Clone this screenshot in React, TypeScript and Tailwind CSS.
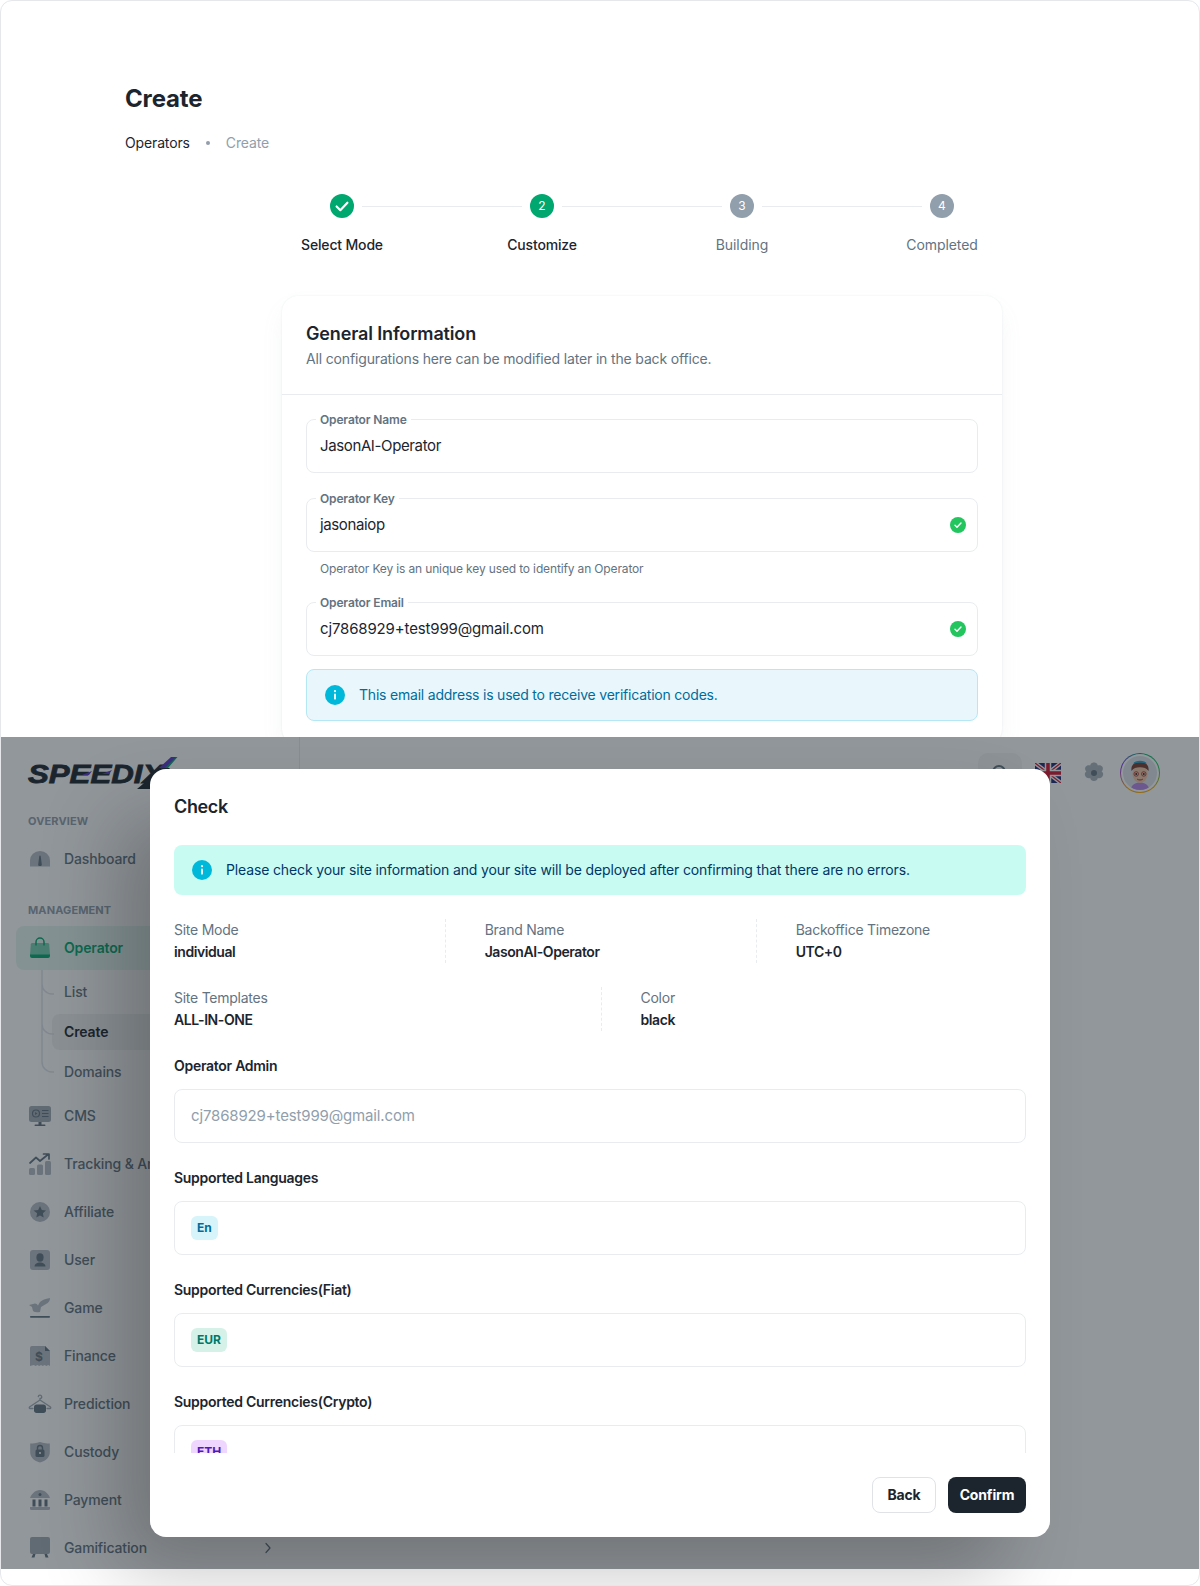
import React from "react";

const Info = ({ c = "text-[#00b8d9]" }: { c?: string }) => (
  <svg viewBox="0 0 20 20" className={`h-5 w-5 shrink-0 ${c}`}>
    <circle cx="10" cy="10" r="10" fill="currentColor" />
    <rect x="9.1" y="8.6" width="1.8" height="6" rx="0.9" fill="#fff" />
    <circle cx="10" cy="6.2" r="1.1" fill="#fff" />
  </svg>
);

const GreenCheck = () => (
  <svg viewBox="0 0 16 16" className="h-4 w-4 shrink-0">
    <circle cx="8" cy="8" r="8" fill="#22c55e" />
    <path d="M5 8.3l2 2 4-4.3" fill="none" stroke="#fff" strokeWidth="1.4" strokeLinecap="round" strokeLinejoin="round" />
  </svg>
);

const Step = ({ n, label, state, first, last }: { n: string; label: string; state: "done" | "active" | "idle"; first?: boolean; last?: boolean }) => (
  <div className="flex w-[200px] flex-col items-center">
    <div className="flex w-full items-center">
      <div className={`h-px flex-1 ${first ? "" : "bg-[#e9ecef]"}`} />
      <div className={`mx-2 flex h-6 w-6 items-center justify-center rounded-full text-xs ${state === "idle" ? "bg-[#919eab]" : "bg-[#00a76f]"} text-white`}>
        {state === "done" ? (
          <svg viewBox="0 0 24 24" className="h-5 w-5">
            <path d="M5.5 12.5l4.5 4.5 8.5-9" fill="none" stroke="#fff" strokeWidth="2.6" strokeLinecap="round" strokeLinejoin="round" />
          </svg>
        ) : (
          n
        )}
      </div>
      <div className={`h-px flex-1 ${last ? "" : "bg-[#e9ecef]"}`} />
    </div>
    <div className={`mt-4 text-sm leading-[22px] ${state === "idle" ? "tracking-[-0.005em] text-[#637381]" : "font-medium tracking-[-0.012em] text-[#1c252e]"}`}>{label}</div>
  </div>
);

const Field = ({ label, value, check, wide }: { label: string; value: string; check?: boolean; wide?: boolean }) => (
  <div className="relative flex h-[54px] items-center justify-between rounded-lg border border-[#e9ecef] px-[13px]">
    <span className="absolute -top-[9px] left-[9px] bg-white px-1 text-xs font-semibold leading-[18px] tracking-[-0.012em] text-[#637381]">{label}</span>
    <span className={`text-[15px] text-[#1c252e] ${wide ? "tracking-[-0.01em]" : "tracking-[-0.025em]"}`}>{value}</span>
    {check && <span className="-mr-[2px]"><GreenCheck /></span>}
  </div>
);

const I = ({ children, className = "" }: { children: React.ReactNode; className?: string }) => (
  <svg viewBox="0 0 24 24" className={`h-6 w-6 shrink-0 ${className}`} fill="currentColor">
    {children}
  </svg>
);

const icons: Record<string, React.ReactNode> = {
  Dashboard: (
    <I>
      <path opacity=".48" d="M2 19.5v-6a10 9.5 0 0 1 20 0v6z" />
      <path d="M12 8.5c.5 0 .7.4.8 1l.9 7.2a1.8 1.8 0 0 1-1.7 2.3 1.8 1.8 0 0 1-1.7-2.3l.9-7.2c.1-.6.3-1 .8-1z" />
    </I>
  ),
  Operator: (
    <I>
      <path opacity=".48" d="M4.3 7h15.4c.8 0 1.4.6 1.5 1.3l.8 10.7H2l.8-10.7C2.9 7.6 3.500 7 4.300 7z" />
      <path d="M2 18.500h20v1.500a2 2 0 0 1-2 2H4a2 2 0 0 1-2-2z" />
      <path d="M8 9V6a4 4 0 0 1 8 0v3" fill="none" stroke="currentColor" strokeWidth="1.500" strokeLinecap="round" />
    </I>
  ),
  CMS: (
    <I>
      <rect opacity=".6" x="1" y="2" width="22" height="16" rx="2.500" />
      <circle cx="8" cy="9.500" r="3.500" fill="none" stroke="currentColor" strokeWidth="1.200" />
      <path d="M7 8v3l2.500-1.500z" />
      <path d="M14 6.500h6.500M14 9.500h6.500M14 12.500h6.500" stroke="currentColor" strokeWidth="1.200" />
      <rect x="10.500" y="18" width="3" height="3" />
      <rect x="6.500" y="20.500" width="11" height="1.500" rx=".7" />
    </I>
  ),
  Tracking: (
    <I>
      <rect opacity=".48" x="1" y="16" width="6" height="7" rx="1.500" />
      <rect opacity=".48" x="9" y="12.500" width="6" height="10.500" rx="1.500" />
      <rect opacity=".48" x="17" y="9" width="6" height="14" rx="1.500" />
      <path d="M2 11l6-5.500 4 3.500L20 2.500M15.500 2h5.500v5" fill="none" stroke="currentColor" strokeWidth="1.700" strokeLinecap="round" strokeLinejoin="round" />
    </I>
  ),
  Affiliate: (
    <I>
      <circle opacity=".48" cx="12" cy="12" r="10" />
      <path d="M12 6l1.800 3.900 4.200.5-3.100 2.900.8 4.200-3.700-2.100-3.700 2.100.8-4.200L5.500 10.400l4.700-.5z" />
    </I>
  ),
  User: (
    <I>
      <rect opacity=".48" x="2" y="2" width="20" height="20" rx="3" />
      <ellipse cx="12" cy="9.500" rx="3.600" ry="4.200" />
      <path d="M6.500 18.500c.3-3 2.800-4 5.500-4s5.200 1 5.500 4z" />
    </I>
  ),
  Game: (
    <I>
      <path opacity=".48" d="M1 9l6-1.500q2 0 3 2l2-3.500q3-3 10-4q0 4-4 6l-5 3-1 5q-5 1-7-1l-1-4z" />
      <rect x="2" y="20" width="20" height="1.700" rx=".8" />
    </I>
  ),
  Finance: (
    <I>
      <path opacity=".48" d="M4 2h13l5 5v15l-1.800-1-1.800 1-1.800-1-1.800 1-1.800-1-1.800 1-1.800-1-1.800 1-1.800-1L2 22V4a2 2 0 0 1 2-2z" />
      <path d="M17 2l5 5h-5z" />
      <text x="11" y="16.500" textAnchor="middle" fontSize="12" fontWeight="700" fontFamily="Inter, sans-serif">$</text>
    </I>
  ),
  Prediction: (
    <I>
      <path d="M12 6.500c1.500 0 1.900-1 1.700-1.900-.2-.9-.9-1.400-1.700-1.400s-1.600.5-1.700 1.400M12 6.500v1.500L1.500 15c-.5.500-.2 1.500.5 1.500h3M12 8l10.500 7c.5.500.2 1.500-.5 1.500h-3" fill="none" stroke="currentColor" strokeOpacity=".6" strokeWidth="1.300" strokeLinecap="round" />
      <path d="M6 15c0-1.500 1-2.500 2.500-2.500h7c1.500 0 2.500 1 2.500 2.500v3.500c0 1.500-1 2.500-2.500 2.500h-7C7 21 6 20 6 18.500z" />
    </I>
  ),
  Custody: (
    <I>
      <path opacity=".48" d="M2.200 3.500C5 3.500 8 3 12 2c4 1 7 1.500 9.800 1.500v8.500c0 5.500-4 9-9.800 10.500C6.200 21 2.200 17.500 2.200 12z" />
      <rect x="7.500" y="9.500" width="9" height="7.500" rx="1.500" />
      <path d="M9.500 10V8a2.500 2.500 0 0 1 5 0v2" fill="none" stroke="currentColor" strokeWidth="1.400" />
      <circle cx="12" cy="13" r="1" fill="#fff" />
    </I>
  ),
  Payment: (
    <I>
      <path opacity=".48" d="M2 10C3 6.500 7 2 12 2s9 4.500 10 8z" />
      <circle cx="12" cy="6.500" r="1.500" />
      <path d="M4.500 11.500h3v7h-3zM10.500 11.500h3v7h-3zM16.500 11.500h3v7h-3z" />
      <path opacity=".48" d="M2 19h20v1.500a1.500 1.500 0 0 1-1.500 1.500h-17A1.500 1.500 0 0 1 2 20.500z" />
    </I>
  ),
  Gamification: (
    <I>
      <rect opacity=".6" x="2" y="1" width="20" height="17" rx="2" />
      <path d="M5 18h2.500l-1 3.500H3.500zM16.500 18H19l1.500 3.500h-3z" />
    </I>
  ),
};

const NavRow = ({ name, label, chevron }: { name: string; label: string; chevron?: boolean }) => (
  <div className="flex h-11 items-center gap-3 rounded-lg px-3 text-[#637381]">
    {icons[name]}
    <span className="flex-1 whitespace-nowrap text-sm font-medium tracking-[-0.01em]">{label}</span>
    {chevron && (
      <svg viewBox="0 0 16 16" className="-mr-[3px] h-4 w-4 text-[#637381]">
        <path d="M6 3.500L10 8 6 12.500" fill="none" stroke="currentColor" strokeWidth="1.200" strokeLinecap="round" strokeLinejoin="round" />
      </svg>
    )}
  </div>
);

const Logo = () => (
  <div className="relative h-8 w-[150px]">
    <span className="absolute left-0 top-[5px] origin-left scale-x-[1.2] font-['Liberation_Sans',sans-serif] text-[26px] font-bold italic leading-[24px] text-[#1c252e] [-webkit-text-stroke:0.8px_#1c252e]">
      SPEEDIX
    </span>
    <svg viewBox="0 0 150 32" className="absolute inset-0 h-8 w-[150px]">
      <path d="M109 32L134 11h8L124 32z" fill="#1c252e" />
      <path d="M131 11L143 0h6L139 11z" fill="#5a35c9" />
      <path d="M137 11L148 0h1.500L140 11z" fill="#00a76f" />
      <path d="M54 18l10-4-3 4zM74 17l10-4-3 4z" fill="#5a35c9" />
    </svg>
  </div>
);

const Sidebar = () => (
  <aside className="relative h-full w-[299px] shrink-0 px-[15px] pt-5">
    <div className="absolute right-0 top-0 h-[32px] w-px bg-[#e9ecef]" />
    <div className="pl-[12px]"><Logo /></div>
    <div className="mt-[23px] pl-3 text-[11px] font-bold uppercase leading-[18px] tracking-[0.01em] text-[#919eab]">Overview</div>
    <div className="mt-[7px]"><NavRow name="Dashboard" label="Dashboard" /></div>
    <div className="mt-5 pl-3 text-[11px] font-bold uppercase leading-[18px] tracking-[0.01em] text-[#919eab]">Management</div>
    <div className="mt-[7px] flex flex-col gap-1">
      <div className="flex h-11 items-center gap-3 rounded-lg bg-[#00a76f]/10 px-3 text-[#00a76f]">
        {icons.Operator}
        <span className="text-sm font-semibold tracking-[-0.01em]">Operator</span>
      </div>
      <div className="relative flex flex-col gap-1 pl-9 text-sm font-medium tracking-[-0.01em] text-[#637381]">
        <svg viewBox="0 0 14 104" className="absolute -top-1 left-[25px] h-[104px] w-[14px]" fill="none" stroke="#dfe3e8" strokeWidth="1.500">
          <path d="M1 0v92a10 10 0 0 0 10 10h2M1 14a10 10 0 0 0 10 10h2M1 54a10 10 0 0 0 10 10h2" />
        </svg>
        <div className="flex h-9 items-center px-3">List</div>
        <div className="flex h-9 items-center rounded-lg bg-[#919eab]/15 px-3 font-semibold text-[#1c252e]">Create</div>
        <div className="flex h-9 items-center px-3">Domains</div>
      </div>
      <NavRow name="CMS" label="CMS" />
      <NavRow name="Tracking" label="Tracking & Analytics" />
      <NavRow name="Affiliate" label="Affiliate" />
      <NavRow name="User" label="User" />
      <NavRow name="Game" label="Game" />
      <NavRow name="Finance" label="Finance" />
      <NavRow name="Prediction" label="Prediction" />
      <NavRow name="Custody" label="Custody" />
      <NavRow name="Payment" label="Payment" />
      <NavRow name="Gamification" label="Gamification" chevron />
    </div>
  </aside>
);

const Header = () => (
  <div className="flex h-[72px] flex-1 items-center justify-end pr-[39px]">
    <div className="flex h-10 w-[44px] items-center justify-center rounded-[10px] bg-[#919eab]/10 text-[#637381]">
      <svg viewBox="0 0 20 20" className="h-5 w-5" fill="none" stroke="currentColor" strokeWidth="2"><circle cx="9" cy="9" r="6" /><path d="M14 14l3.500 3.500" /></svg>
    </div>
    <svg viewBox="0 0 26 20" className="ml-[13px] h-5 w-[26px]">
      <rect width="26" height="20" fill="#1e2a78" />
      <path d="M0 0l26 20M26 0L0 20" stroke="#fff" strokeWidth="4" />
      <path d="M0 0l26 20M26 0L0 20" stroke="#d3122c" strokeWidth="1.300" />
      <path d="M13 0v20M0 10h26" stroke="#fff" strokeWidth="6.500" />
      <path d="M13 0v20M0 10h26" stroke="#d3122c" strokeWidth="3.500" />
    </svg>
    <svg viewBox="0 0 24 24" className="ml-[21px] h-6 w-6 text-[#637381]">
      <path fill="currentColor" opacity=".55" d="M12 1.500c2 0 3.500 1.300 3.800 3 1.700-.7 3.600-.3 4.600 1.300 1 1.700.5 3.600-.8 4.800a3.700 3.700 0 0 1 .8 5c-1 1.500-3 2-4.600 1.400-.3 1.700-1.800 3-3.800 3s-3.500-1.300-3.800-3c-1.700.6-3.600.1-4.600-1.400a3.700 3.700 0 0 1 .8-5c-1.300-1.200-1.800-3.100-.8-4.800 1-1.600 2.900-2 4.600-1.300.3-1.700 1.800-3 3.800-3z" />
      <circle cx="12" cy="12" r="3" fill="currentColor" />
    </svg>
    <div className="ml-[14px] flex h-10 w-10 items-center justify-center rounded-full bg-[conic-gradient(#00a76f,#22c55e,#ffab00,#ffab00,#8e33ff,#00a76f)]">
      <div className="flex h-[38px] w-[38px] items-center justify-center rounded-full bg-white">
        <svg viewBox="0 0 36 36" className="h-[34px] w-[34px] overflow-hidden rounded-full">
          <rect width="36" height="36" fill="#dfe3e8" />
          <path d="M8 36c1-6 5-8 10-8s9 2 10 8z" fill="#b985e8" />
          <ellipse cx="18" cy="19" rx="8" ry="9.500" fill="#f2c6a8" />
          <path d="M9 16c-1-7 4-10 9-10s10 3 9 10c-2-3-5-4-9-4s-7 1-9 4z" fill="#7a3b2e" />
          <path d="M11 8c1-4 13-4 14 0-4-1-10-1-14 0z" fill="#2aa3c9" />
          <circle cx="14" cy="19" r="2.400" fill="none" stroke="#a32020" strokeWidth=".8" />
          <circle cx="22" cy="19" r="2.400" fill="none" stroke="#a32020" strokeWidth=".8" />
          <circle cx="14" cy="19" r="1" fill="#222" />
          <circle cx="22" cy="19" r="1" fill="#222" />
          <path d="M15 24.500c2 1.200 4 1.200 6 0" fill="none" stroke="#a32020" strokeWidth="1" />
        </svg>
      </div>
    </div>
  </div>
);

const Info2 = ({ label, value }: { label: string; value: string }) => (
  <div className="flex flex-col">
    <span className="text-sm leading-[22px] tracking-[-0.018em] text-[#637381]">{label}</span>
    <span className="text-sm font-semibold leading-[22px] tracking-[-0.03em] text-[#1c252e]">{value}</span>
  </div>
);

const Dash = () => <div className="h-full border-l border-dashed border-[#e9ecef]" />;

const SecLabel = ({ children }: { children: React.ReactNode }) => (
  <div className="text-sm font-semibold leading-[22px] tracking-[-0.02em] text-[#1c252e]">{children}</div>
);

const ChipBox = ({ text, cls }: { text: string; cls: string }) => (
  <div className="mt-3 flex h-[54px] shrink-0 items-center rounded-lg border border-[#e9ecef] pl-4">
    <span className={`flex h-6 items-center rounded-md px-1.5 text-xs font-bold ${cls}`}>{text}</span>
  </div>
);

const Modal = () => (
  <div className="absolute left-[149px] top-[32px] flex h-[768px] w-[900px] flex-col rounded-2xl bg-white shadow-[-40px_40px_80px_-8px_rgba(0,0,0,0.24)]">
    <div className="p-6 text-lg font-semibold leading-7 tracking-[-0.02em] text-[#1c252e]">Check</div>
    <div className="flex min-h-0 flex-1 flex-col overflow-hidden px-6">
      <div className="flex h-[50px] shrink-0 items-center gap-[14px] rounded-lg bg-[#c8fcf3] pl-[18px] text-sm tracking-[-0.01em] text-[#003768]">
        <Info />
        <span>Please check your site information and your site will be deployed after confirming that there are no errors.</span>
      </div>
      <div className="mt-6 grid shrink-0 grid-cols-[230.67px_0px_231px_0px_1fr] gap-x-10">
        <Info2 label="Site Mode" value="individual" />
        <Dash />
        <Info2 label="Brand Name" value="JasonAI-Operator" />
        <Dash />
        <Info2 label="Backoffice Timezone" value="UTC+0" />
      </div>
      <div className="mt-6 grid shrink-0 grid-cols-[386.5px_0px_1fr] gap-x-10">
        <Info2 label="Site Templates" value="ALL-IN-ONE" />
        <Dash />
        <Info2 label="Color" value="black" />
      </div>
      <div className="mt-6"><SecLabel>Operator Admin</SecLabel></div>
      <div className="mt-3 flex h-[54px] shrink-0 items-center rounded-lg border border-[#e9ecef] pl-4 text-[15px] tracking-[-0.01em] text-[#919eab]">cj7868929+test999@gmail.com</div>
      <div className="mt-6"><SecLabel>Supported Languages</SecLabel></div>
      <ChipBox text="En" cls="bg-[#d6f4f9] text-[#006c9c]" />
      <div className="mt-6"><SecLabel>Supported Currencies(Fiat)</SecLabel></div>
      <ChipBox text="EUR" cls="bg-[#d6f1e8] text-[#007867]" />
      <div className="mt-6"><SecLabel>Supported Currencies(Crypto)</SecLabel></div>
      <ChipBox text="ETH" cls="bg-[#efd6ff] text-[#5119b7]" />
    </div>
    <div className="flex shrink-0 justify-end gap-3 p-6">
      <button className="h-9 w-16 rounded-lg border border-[#dfe3e8] bg-white text-sm font-bold tracking-[-0.01em] text-[#1c252e]">Back</button>
      <button className="h-9 w-[78px] rounded-lg bg-[#1c252e] text-sm font-bold tracking-[-0.01em] text-white">Confirm</button>
    </div>
  </div>
);

export default function App() {
  return (
    <div className="h-[1586px] w-full overflow-hidden rounded-xl border border-[#e5e7eb] bg-white font-['Inter',sans-serif] text-[#1c252e]">
      <section className="h-[736px] overflow-hidden pl-[124px] pt-[80px]">
        <h1 className="text-2xl font-bold leading-9 tracking-[-0.006em] text-[#1c252e]">Create</h1>
        <div className="mt-[15px] flex h-[22px] items-center text-sm tracking-[-0.01em]">
          <span className="text-[#1c252e]">Operators</span>
          <span className="mx-4 h-1 w-1 rounded-full bg-[#919eab]" />
          <span className="text-[#919eab]">Create</span>
        </div>
        <div className="ml-[117px] mt-10 flex w-[800px]">
          <Step n="1" label="Select Mode" state="done" first />
          <Step n="2" label="Customize" state="active" />
          <Step n="3" label="Building" state="idle" />
          <Step n="4" label="Completed" state="idle" last />
        </div>
        <div className="ml-[157px] mt-10 w-[720px] rounded-2xl bg-white shadow-[0_0_2px_rgba(145,158,171,0.2),0_12px_24px_-4px_rgba(145,158,171,0.12)]">
          <div className="border-b border-[#e9ecef] p-6">
            <h2 className="text-lg font-semibold leading-7 tracking-[-0.008em] text-[#1c252e]">General Information</h2>
            <p className="text-sm leading-[22px] tracking-[-0.011em] text-[#637381]">All configurations here can be modified later in the back office.</p>
          </div>
          <div className="flex flex-col p-6">
            <Field label="Operator Name" value="JasonAI-Operator" />
            <div className="mt-[25px]"><Field label="Operator Key" value="jasonaiop" check /></div>
            <p className="mt-2 pl-[14px] text-xs leading-[18px] tracking-[-0.012em] text-[#637381]">Operator Key is an unique key used to identify an Operator</p>
            <div className="mt-6"><Field label="Operator Email" value="cj7868929+test999@gmail.com" check wide /></div>
            <div className="mt-[13px] flex h-[52px] items-center gap-[14px] rounded-lg border border-[#b4e8f5] bg-[#e9f7fc] pl-[18px] text-sm tracking-[-0.015em] text-[#006c9c]">
              <Info />
              <span>This email address is used to receive verification codes.</span>
            </div>
          </div>
        </div>
      </section>
      <section className="relative z-10 h-[832px]">
        <div className="flex h-full overflow-hidden bg-white">
          <Sidebar />
          <Header />
        </div>
        <div className="absolute inset-0 bg-[rgba(28,37,46,0.48)]" />
        <Modal />
      </section>
    </div>
  );
}
